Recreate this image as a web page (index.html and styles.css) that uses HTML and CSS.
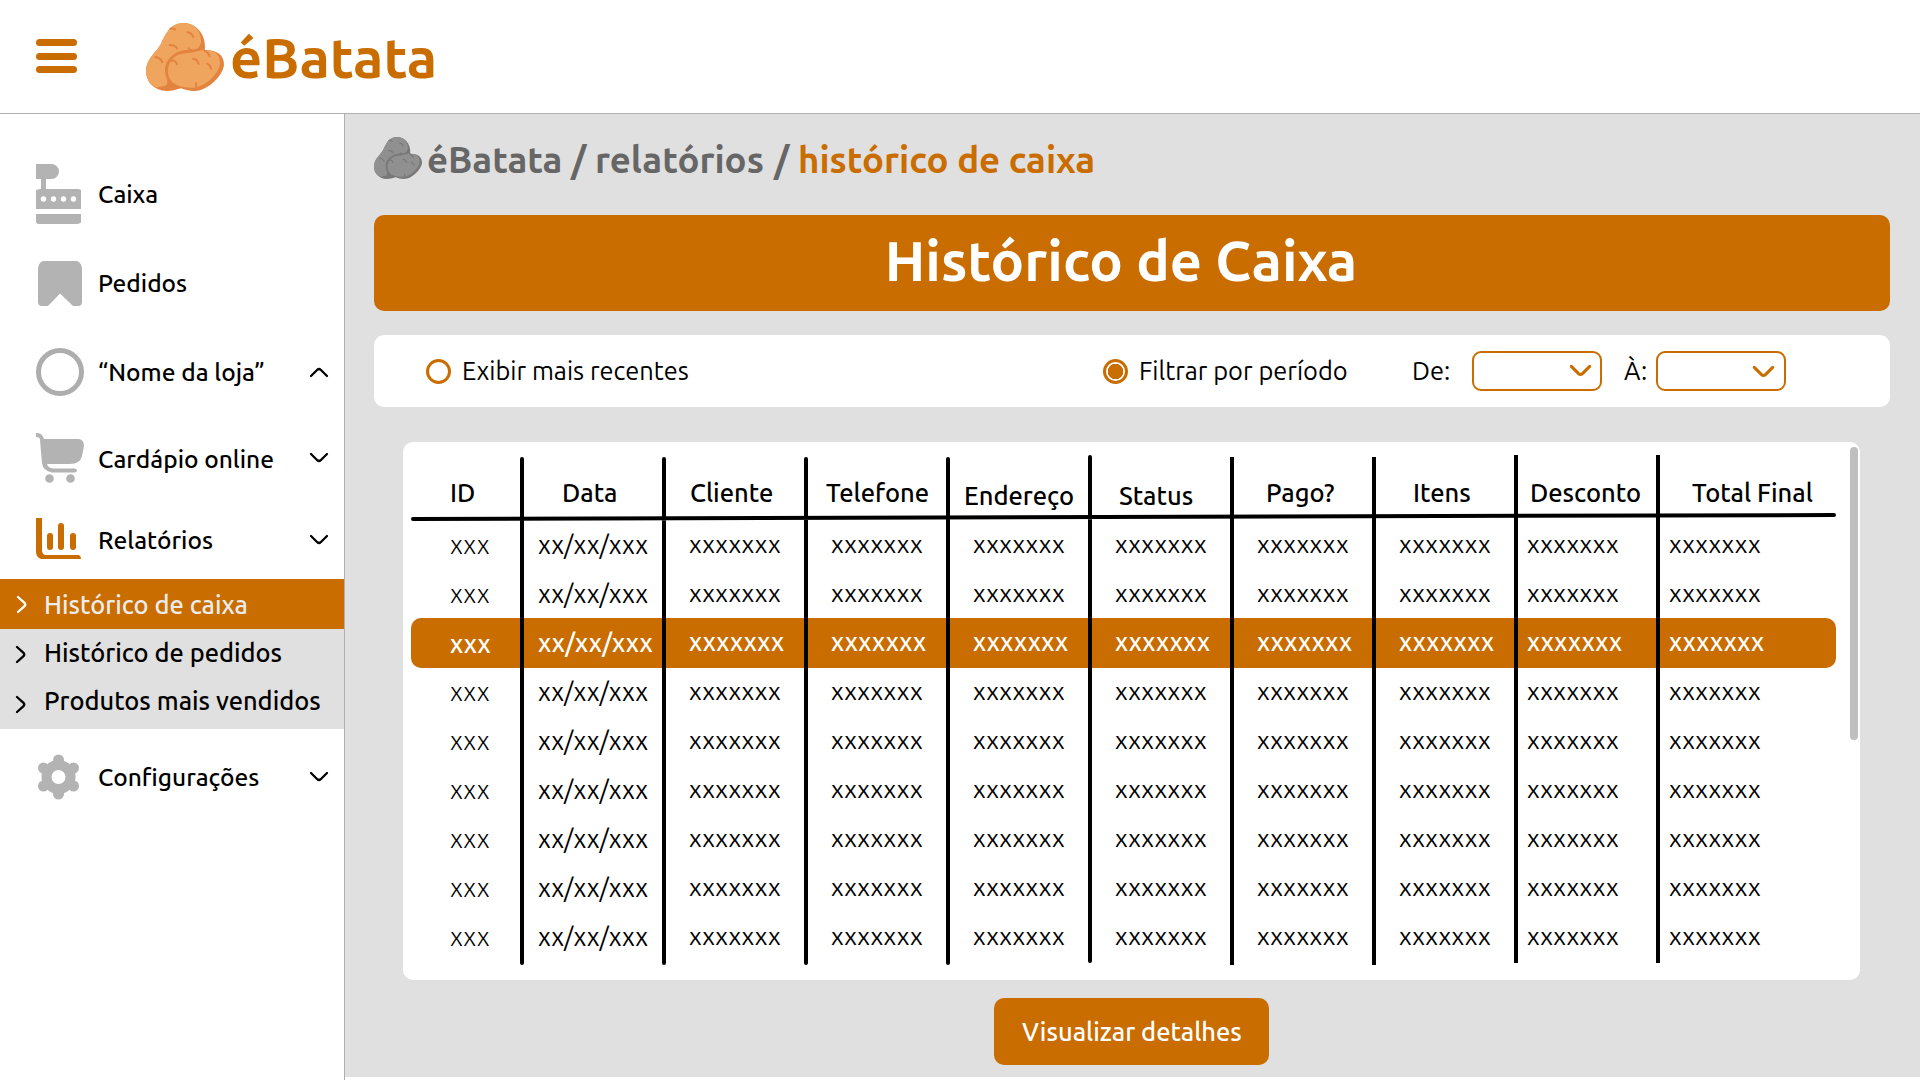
FILE: index.html
```html
<!DOCTYPE html>
<html lang="pt-BR">
<head>
<meta charset="utf-8">
<title>éBatata – Histórico de Caixa</title>
<link rel="stylesheet" href="styles.css">
</head>
<body>
<svg class="defs" width="0" height="0">
  <symbol id="potato" viewBox="0 0 234 204">
    <path class="p-dark" d="M0 143C2 105 28 92 45 62C58 36 72 0 112 0C150 0 177 32 177 72L176 81C212 80 234 96 234 124C234 152 190 204 145 204C128 204 116 200 105 196C90 201 78 204 62 204C25 202 0 178 0 143Z"/>
    <path class="p-light" d="M0 143C2 105 28 92 45 62C58 36 72 0 112 0C144 0 162 20 165 50C166 66 158 77 145 79C122 81 104 80 85 93C62 108 54 130 58 152C62 168 68 180 60 187C52 191 42 190 32 194C10 184 0 166 0 143Z"/>
    <path class="p-light" d="M66 146C66 112 88 93 118 91C146 90 154 80 182 82C208 83 222 96 222 120C220 150 180 193 140 194C104 194 66 184 66 146Z"/>
    <path class="p-mark" d="M73 17C79 16 84 17 88 20M124 28C132 29 139 35 142 42M71 66C80 66 89 70 93 76M28 102C36 103 45 109 49 117M128 76L137 84M76 114C84 110 90 116 93 124M141 107C149 108 156 115 158 123M176 83C183 87 190 93 191 100M183 122C190 125 194 131 195 137M150 181L151 192"/>
  </symbol>
  <symbol id="chev" viewBox="0 0 20 12"><path d="M2 2L8.3 8.2Q10 9.8 11.7 8.2L18 2"/></symbol>
</svg>

<header class="topbar">
  <div class="burger"><i></i><i></i><i></i></div>
  <svg class="logo-icon"><use href="#potato"/></svg>
  <span class="logo-text">éBatata</span>
</header>

<div class="layout">
  <aside class="sidebar">
    <a class="item caixa">
      <svg class="ico" width="48" height="60"><path d="M0 0H15.5A7.5 7.5 0 0 1 15.5 15H10V25H42Q45 25 45 26.5V45H0V26.5Q0 25 5 25V15H0ZM0 50H45V58.5Q43 60 40 60H5Q1 60 0 58.5Z"/><g fill="#fff"><circle cx="7.5" cy="35" r="2.7"/><circle cx="17.5" cy="35" r="2.7"/><circle cx="27.5" cy="35" r="2.7"/><circle cx="37.5" cy="35" r="2.7"/></g></svg>
      <span>Caixa</span>
    </a>
    <a class="item pedidos">
      <svg class="ico" width="48" height="45"><path d="M7 0H41Q46 2 46 9V41Q46 45 42 45H37L24 32.500L12 45H6Q2 45 2 41V9Q2 2 7 0Z"/></svg>
      <span>Pedidos</span>
    </a>
    <a class="item loja">
      <svg class="ico" width="48" height="48"><circle class="ring" cx="24" cy="24" r="21.500"/></svg>
      <span>“Nome da loja”</span>
      <svg class="chev up"><use href="#chev"/></svg>
    </a>
    <a class="item cardapio">
      <svg class="ico" width="48" height="52"><path d="M0 1Q6 0 8 7H43Q48 8 48 14L46 24Q44 32 34 32H11Q12 36 17 36.500H39Q41 37 41 38.500T39 40.500H16Q7 39 6 31L4 8Q4 5 0 5Z"/><circle cx="13.500" cy="46.500" r="4.300"/><circle cx="34.500" cy="46.500" r="4.300"/></svg>
      <span>Cardápio online</span>
      <svg class="chev"><use href="#chev"/></svg>
    </a>
    <a class="item relatorios">
      <svg class="ico accent" width="48" height="41"><path d="M0 0H6V32Q6 37 10 37H43Q45 38 45 41H5Q0 39 0 34Z"/><rect x="11" y="15" width="6" height="17" rx="3"/><rect x="22" y="5" width="6" height="27" rx="3"/><rect x="34" y="15" width="6" height="17" rx="3"/></svg>
      <span>Relatórios</span>
      <svg class="chev"><use href="#chev"/></svg>
    </a>
    <nav class="sub">
      <a class="active"><svg class="arrow"><path d="M2 2L8.500 7.800Q10 9.500 8.500 11.200L2 17"/></svg><span>Histórico de caixa</span></a>
      <a><svg class="arrow"><path d="M2 2L8.500 7.800Q10 9.500 8.500 11.200L2 17"/></svg><span>Histórico de pedidos</span></a>
      <a><svg class="arrow low"><path d="M2 2L8.500 7.800Q10 9.500 8.500 11.200L2 17"/></svg><span>Produtos mais vendidos</span></a>
    </nav>
    <a class="item config">
      <svg class="ico" width="48" height="46" viewBox="-22.500 -23 48 46"><circle class="gear" r="12"/><g><circle cy="-17" r="5.500"/><circle cy="17" r="5.500"/><circle cx="-15" cy="-9" r="5.500"/><circle cx="15" cy="-9" r="5.500"/><circle cx="-15" cy="9" r="5.500"/><circle cx="15" cy="9" r="5.500"/></g></svg>
      <span>Configurações</span>
      <svg class="chev"><use href="#chev"/></svg>
    </a>
  </aside>

  <main class="main">
    <div class="crumbs">
      <svg class="crumb-icon"><use href="#potato"/></svg>
      <span class="c1">éBatata</span><span class="s1">/</span><span class="c2">relatórios</span><span class="s2">/</span><span class="here">histórico de caixa</span>
    </div>
    <h1 class="banner">Histórico de Caixa</h1>
    <div class="filters">
      <i class="radio"></i><span class="recent">Exibir mais recentes</span>
      <i class="radio on"></i><span class="period">Filtrar por período</span>
      <span class="de">De:</span><div class="select"><svg class="chev"><use href="#chev"/></svg></div>
      <span class="ate">À:</span><div class="select second"><svg class="chev"><use href="#chev"/></svg></div>
    </div>
    <section class="card">
      <div class="row head">
        <b class="h-id">ID</b><b class="h-data">Data</b><b class="h-cli">Cliente</b><b class="h-tel">Telefone</b><b class="h-end">Endereço</b><b class="h-sta">Status</b><b class="h-pago">Pago?</b><b class="h-itens">Itens</b><b class="h-desc">Desconto</b><b class="h-total">Total Final</b>
      </div>
      <div id="rows"></div>
      <svg class="rules" width="1457" height="538">
        <path class="round" d="M119 17V521M261 17V521M403 17V521M545 17V521M687 15V519M10 77L1431 73"/>
        <path d="M829 15V523M971 15V523M1113 13V521M1255 13V521"/>
      </svg>
      <div class="scroll"></div>
    </section>
    <button class="details">Visualizar detalhes</button>
  </main>
</div>
<script src="rows.js"></script>
</body>
</html>
```
FILE: rows.js
```js
const SELECTED = 2;
const record = ['xxx', 'xx/xx/xxx', ...Array(8).fill('xxxxxxx')];
const rows = document.getElementById('rows');
for (let i = 0; i < 9; i++) {
  const row = document.createElement('div');
  row.className = i === SELECTED ? 'row selected' : 'row';
  for (const value of record) {
    const cell = document.createElement('span');
    cell.textContent = value;
    row.append(cell);
  }
  rows.append(row);
}
```
FILE: styles.css
```css
:root { --orange: #c96d00; --gray: #e0e0e0; --icon: #b3b3b3; --line: #b0b0b0; }
* { box-sizing: border-box; }
body { margin: 0; height: 1080px; overflow: hidden; background: #fff; color: #000; font-family: Ubuntu, "Noto Sans", sans-serif; font-size: 24.5px; font-weight: 500; }
svg { display: block; flex: none; }
span, b, h1 { white-space: nowrap; }
.defs { position: absolute; }
.p-dark { fill: #e2833f; }
.p-light { fill: #f0a55f; }
.p-mark { fill: none; stroke: #e2833f; stroke-width: 6; stroke-linecap: round; }

.topbar { display: flex; align-items: flex-start; height: 114px; border-bottom: 1px solid var(--line); padding-left: 36px; }
.burger { display: flex; flex-direction: column; gap: 6.5px; width: 41px; margin: 39px 69px 0 0; }
.burger i { height: 7px; border-radius: 4px; background: var(--orange); }
.logo-icon { width: 78px; height: 68px; margin-top: 23px; }
.logo-text { margin: 21px 0 0 6px; font-size: 56px; line-height: 74px; font-weight: 700; color: var(--orange); }

.layout { display: flex; height: 966px; }
.sidebar { width: 345px; flex: none; border-right: 1px solid var(--line); padding-top: 35px; }
.item { display: flex; align-items: center; padding-left: 36px; }
.item span { margin-left: 14px; flex: 1; }
.item .chev { margin-right: 15px; }
.ico { fill: var(--icon); }
.accent { fill: var(--orange); }
.ring { fill: none; stroke: #adadad; stroke-width: 5; }
.gear { fill: none; stroke: var(--icon); stroke-width: 10; }
.chev { width: 20px; height: 12px; fill: none; stroke: #000; stroke-width: 2.3; stroke-linecap: round; }
.up { transform: rotate(180deg); }
.caixa { height: 90px; }
.pedidos { height: 88px; }
.loja { height: 90px; }
.cardapio { height: 84px; }
.cardapio svg { margin-bottom: 2px; }
.relatorios { height: 78px; }
.relatorios .ico { margin-bottom: 3px; }
.relatorios .chev { margin-bottom: 1px; }
.config { height: 96px; }
.config .ico { margin-bottom: 1px; }
.sub { height: 150px; background: var(--gray); font-size: 25.4px; }
.sub a { display: flex; align-items: center; height: 48px; padding-left: 15px; }
.sub span { margin: 0 0 1px 17px; }
.sub .active { height: 50px; padding: 1px 0 0 16px; background: var(--orange); color: #ececec; }
.sub .active span { margin: 0 0 0 16px; }
.arrow { width: 12px; height: 19px; margin-top: 3px; fill: none; stroke: #000; stroke-width: 2.3; stroke-linecap: round; }
.low { margin-top: 6px; }
.active .arrow { margin-top: 0; stroke: #fff; }

.main { flex: 1; height: 963px; background: var(--gray); padding: 23px 30px 0 29px; }
.crumbs { display: flex; height: 42px; font-size: 36.6px; line-height: 46px; font-weight: 700; color: #666; }
.crumb-icon { width: 48px; height: 42px; filter: grayscale(1) brightness(.82); }
.c1 { width: 144px; margin-left: 5px; }
.s1 { width: 24px; }
.c2 { width: 179px; }
.s2 { width: 24px; }
.here { color: var(--orange); }
.banner { height: 96px; margin: 36px 0 24px; padding-right: 22px; border-radius: 10px; background: var(--orange); color: #fff; text-align: center; font-size: 56px; line-height: 92px; font-weight: 700; }
.filters { display: flex; align-items: center; height: 72px; padding-left: 52px; border-radius: 10px; background: #fff; font-size: 25.4px; font-weight: 400; }
.filters span { padding-bottom: 1px; }
.radio { width: 25px; height: 25px; border: 3px solid var(--orange); border-radius: 50%; flex: none; }
.on { background: radial-gradient(circle, var(--orange) 7.5px, #fff 8px); }
.recent { width: 641px; margin-left: 11px; }
.period { width: 273px; margin-left: 11px; }
.de { width: 60px; }
.select { display: flex; align-items: center; justify-content: flex-end; width: 130px; height: 40px; padding-right: 8px; border: 2px solid var(--orange); border-radius: 9px; }
.select .chev { width: 23px; height: 14px; stroke: var(--orange); stroke-width: 2.7; }
.ate { width: 32px; margin-left: 22px; }
.second { padding: 2px 9px 0 0; }

.card { position: relative; width: 1457px; height: 538px; margin: 35px 0 0 29px; padding-left: 8px; border-radius: 10px; background: #fff; }
.row { display: grid; grid-template-columns: 111px repeat(8, 142px) 178px; width: 1425px; height: 49px; line-height: 49px; font-size: 25.1px; font-weight: 400; }
.row span { padding-left: 25px; }
.row span:nth-child(1) { padding: 0 0 0 39px; font-size: 26px; font-weight: 300; }
.row span:nth-child(2) { padding-left: 16px; font-size: 25.3px; }
.row span:nth-child(n+9) { padding-left: 11px; }
.selected { height: 50px; margin-bottom: -1px; border-radius: 10px; background: var(--orange); color: #fff; font-weight: 500; }
.row.selected span:first-child { padding-top: 1px; font-size: 25.3px; font-weight: 500; }
.head { height: 78px; padding-top: 24px; line-height: 53px; font-size: 25.5px; }
.head b { font-weight: 500; }
.h-id { padding-left: 39px; }
.h-data { padding-left: 40px; }
.h-cli { padding-left: 26px; }
.h-tel { padding-left: 20px; }
.h-end { padding: 3px 0 0 16px; }
.h-sta { padding: 3px 0 0 29px; }
.h-pago { padding-left: 34px; }
.h-itens { padding-left: 39px; }
.h-desc { padding-left: 14px; }
.h-total { padding-left: 34px; }
.rules { position: absolute; left: 0; top: 0; fill: none; stroke: #000; stroke-width: 4; }
.round { stroke-linecap: round; }
.scroll { position: absolute; right: 2px; top: 5px; width: 8px; height: 293px; border-radius: 4px; background: #bfbfbf; }
.details { display: block; width: 275px; height: 67px; margin: 18px 0 0 620px; padding: 1px 0 0 1px; border: 0; border-radius: 10px; background: var(--orange); color: #fff; font: 500 25.5px/66px Ubuntu, "Noto Sans", sans-serif; }
```
